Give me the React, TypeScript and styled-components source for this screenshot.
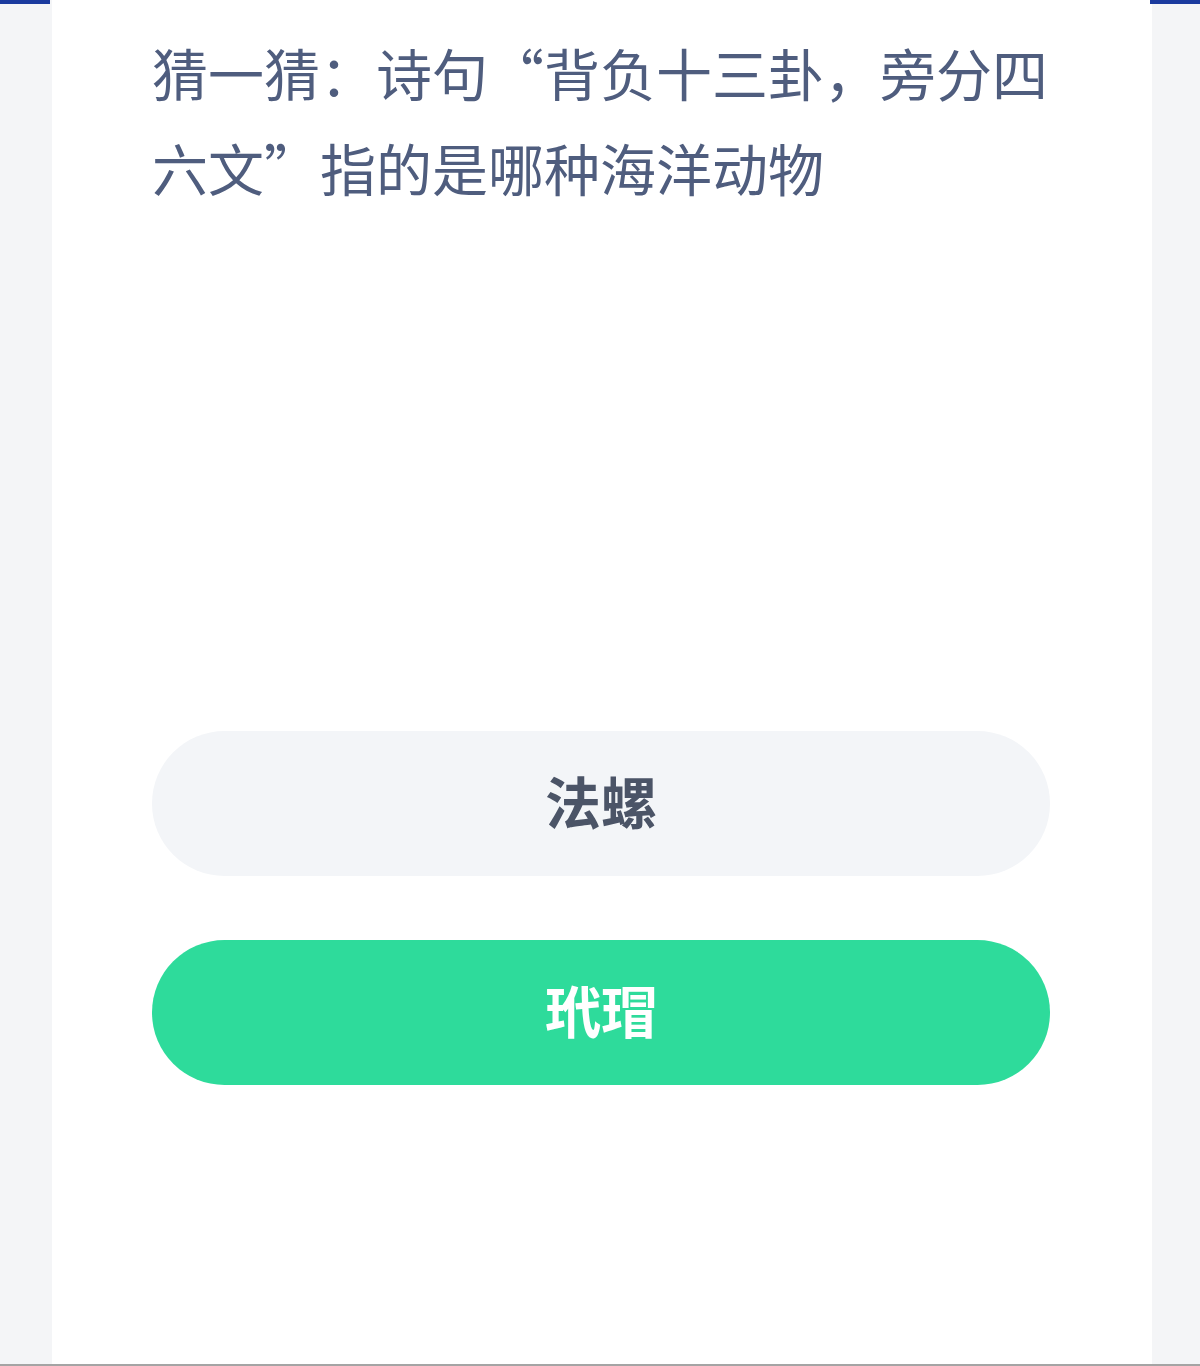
import React from "react";
import styled, { createGlobalStyle } from "styled-components";

const GlobalStyle = createGlobalStyle`
  html, body {
    margin: 0;
    padding: 0;
    background: #f4f5f7;
  }
  body {
    font-family: "Noto Sans CJK SC", "Noto Sans", sans-serif;
  }
`;

const Page = styled.div`
  position: relative;
  width: 1200px;
  height: 1366px;
  display: flex;
  padding-left: 52px;
  background: #f4f5f7;
  border-bottom: 2px solid #a4a4a4;
  box-sizing: border-box;
  overflow: hidden;
`;

const Corner = styled.div<{ side: "left" | "right" }>`
  position: absolute;
  top: 0;
  ${(p) => (p.side === "left" ? "left: 0;" : "right: 0;")}
  width: 50px;
  height: 4px;
  background: #1b3a9e;
`;

const Card = styled.div`
  width: 1100px;
  background: #ffffff;
  padding: 24px 102px 0 100px;
  box-sizing: border-box;
  display: flex;
  flex-direction: column;
`;

const Question = styled.div`
  font-size: 56px;
  line-height: 95px;
  color: #4f5d7e;
  font-weight: 400;
  min-height: 190px;
`;

const Options = styled.div`
  margin-top: 517px;
  display: flex;
  flex-direction: column;
  gap: 64px;
`;

const Option = styled.div<{ picked?: boolean }>`
  height: 145px;
  padding-bottom: 8px;
  box-sizing: border-box;
  border-radius: 73px;
  display: flex;
  align-items: center;
  justify-content: center;
  font-size: 56px;
  font-weight: 700;
  background: ${(p) => (p.picked ? "#2edb9b" : "#f3f5f8")};
  color: ${(p) => (p.picked ? "#ffffff" : "#4b5467")};
`;

const App: React.FC = () => {
  return (
    <>
      <GlobalStyle />
      <Page>
        <Corner side="left" />
        <Corner side="right" />
        <Card>
          <Question>
            猜一猜：诗句“背负十三卦，旁分四
            <br />
            六文”指的是哪种海洋动物
          </Question>
          <Options>
            <Option>法螺</Option>
            <Option picked>玳瑁</Option>
          </Options>
        </Card>
      </Page>
    </>
  );
};

export default App;
